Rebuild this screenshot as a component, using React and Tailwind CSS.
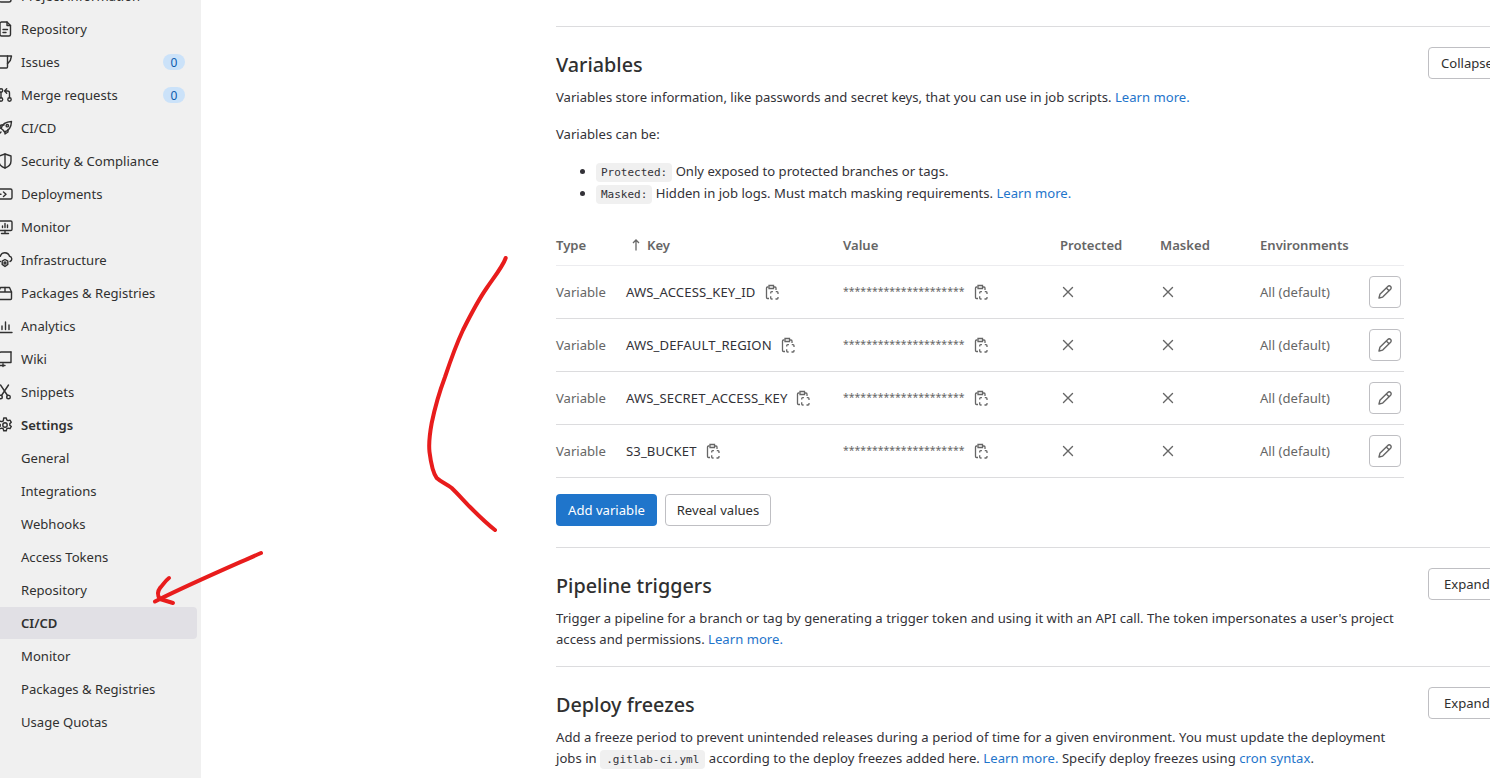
import React from "react";

const Ic = ({ children, className = "" }) => (
  <svg viewBox="0 0 16 16" width="16" height="16" fill="none" stroke="currentColor" strokeWidth="1.4" strokeLinecap="round" strokeLinejoin="round" className={"shrink-0 " + className}>
    {children}
  </svg>
);

const icons = {
  project: <><rect x="2" y="2" width="12" height="12" rx="2" /><path d="M5 6h6M5 9h4" /></>,
  repo: <><path d="M3 2.500A1.500 1.500 0 0 1 4.500 1H10l3.500 3.500V13.500A1.500 1.500 0 0 1 12 15H4.500A1.500 1.500 0 0 1 3 13.500z" /><path d="M10 1v3.500h3.500M6 8.500h4.500M6 11.500h3" /></>,
  issues: <><path d="M-2 2H14.500L13.300 6.500 10.500 9.800" /><path d="M10.500 2V13a1 1 0 0 1-1 1H-2" /></>,
  merge: <><circle cx="4" cy="3.500" r="1.700" /><circle cx="4" cy="12.500" r="1.700" /><circle cx="12.500" cy="12.500" r="1.700" /><path d="M4 5.200v5.600M12.500 10.800V6a2 2 0 0 0-2-2H8M9.700 1.800 7.500 4l2.200 2.200" /></>,
  rocket: <><path d="M6 10 4 8.500C5 5 8.500 1.800 14.500 1.500 14.200 7.500 11 11 7.500 12z" /><circle cx="10.300" cy="5.700" r="1.200" /><path d="M4.500 8H2l2-3h3M8 11.500V14l3-2V9.500M4 12l-2.500 2.500" /></>,
  shield: <><path d="M8 1 2 3v5c0 3.500 2.500 5.800 6 7 3.500-1.200 6-3.500 6-7V3z" /><path d="M8 1v14" /></>,
  deploy: <><path d="M1 4.500A1.500 1.500 0 0 1 2.500 3h11A1.500 1.500 0 0 1 15 4.500v7a1.500 1.500 0 0 1-1.500 1.500h-11A1.500 1.500 0 0 1 1 11.500" /><path d="M6.500 6 9 8.200 6.500 10.500M-2 8.200h6" /></>,
  monitor: <><rect x="1" y="2" width="14" height="9.500" rx="1.200" /><path d="M8 11.500V14.500M4.500 14.500h7M5.500 8.500V7M8 8.500V4.500M10.500 8.500V6" /></>,
  infra: <><path d="M3.500 9.500A2.700 2.700 0 0 1 3.300 4.200 4.800 4.800 0 0 1 12.500 4.300 2.700 2.700 0 0 1 13 9.500" /><circle cx="8" cy="11" r="1" /><path d="M8 7.500l2.800 1.700v3.200L8 14.500l-2.800-2.100V9.200z" /></>,
  pkg: <><path d="M1.500 7 3.500 2.500h9L14.500 7v6.500a1 1 0 0 1-1 1h-11a1 1 0 0 1-1-1z" /><path d="M1.500 7h13M8 2.500V7" /></>,
  chart: <><path d="M1 1.500V14.500H15" /><path d="M5 11.500V8M8.500 11.500V4M12 11.500V7" /></>,
  wiki: <><path d="M14 1H4a2 2 0 0 0-2 2v10.500" /><path d="M14 1v10.500H3.500A1.500 1.500 0 0 0 2 13a1.500 1.500 0 0 0 1.500 1.500H8M6 13v2.500" /><path d="M2 3v10" /></>,
  scissors: <><circle cx="3.500" cy="13" r="1.800" /><circle cx="11.500" cy="13" r="1.800" /><path d="M4.500 11.500 11.500 1M10.500 11.500 3.500 1" /></>,
  gear: <><circle cx="8" cy="8" r="2.200" /><path d="M6.700 1h2.600l.4 1.900 1.400.8 1.900-.6 1.300 2.200-1.500 1.300v1.600l1.500 1.300-1.300 2.200-1.900-.6-1.400.8-.4 1.900H6.700l-.4-1.900-1.400-.8-1.900.6L1.700 10.500l1.500-1.300V7.600L1.700 6.300 3 4.100l1.900.6 1.400-.8z" /></>,
};

const main = [
  ["Project information", "project"], ["Repository", "repo"], ["Issues", "issues", "0"], ["Merge requests", "merge", "0"],
  ["CI/CD", "rocket"], ["Security & Compliance", "shield"], ["Deployments", "deploy"], ["Monitor", "monitor"],
  ["Infrastructure", "infra"], ["Packages & Registries", "pkg"], ["Analytics", "chart"], ["Wiki", "wiki"], ["Snippets", "scissors"],
];
const sub = ["General", "Integrations", "Webhooks", "Access Tokens", "Repository", "CI/CD", "Monitor", "Packages & Registries", "Usage Quotas"];

const Copy = () => (
  <svg viewBox="0 0 16 16" width="16" height="16" fill="none" stroke="#666" strokeWidth="1.300" className="shrink-0">
    <path d="M4.500 3H3.500a1 1 0 0 0-1 1v9.500a1 1 0 0 0 1 1H5" />
    <path d="M5 1.500h4.500V4.500H5zM9.500 3h1.500a1 1 0 0 1 1 1V6" />
    <rect x="6.700" y="7.700" width="7.300" height="7.300" rx="1" strokeDasharray="4 2.870" strokeDashoffset="-4.080" />
  </svg>
);

const Chip = ({ children, className = "px-[5px]" }) => (
  <code className={"rounded-[4px] bg-[#f0f0f0] py-[3px] text-[#333238] text-[11px] [font-family:'DejaVu_Sans_Mono',monospace] " + className}>{children}</code>
);

const A = ({ children }) => <a className="text-[#1f75cb]">{children}</a>;

const Head = ({ title, btn, btnClass }) => (
  <div className="flex h-[32px] items-center justify-between">
    <h2 className="mt-[4px] text-[19.8px] leading-[32px] font-medium text-[#303030]">{title}</h2>
    <button className={"h-[32px] w-[88px] rounded-[4px] border border-[#bfbfc3] bg-white text-left text-[#303030] " + btnClass}>{btn}</button>
  </div>
);

const cols = "grid grid-cols-[70px_217px_217px_100px_100px_109px_35px] items-center";
const rows = ["AWS_ACCESS_KEY_ID", "AWS_DEFAULT_REGION", "AWS_SECRET_ACCESS_KEY", "S3_BUCKET"];

export default function App() {
  return (
    <div className="relative flex h-[778px] w-[1490px] overflow-hidden bg-white text-[13.1px] leading-[21px] text-[#333238] [font-family:'Noto_Sans',sans-serif]">
      <aside className="h-full w-[201px] shrink-0 overflow-hidden bg-[#f0f0f0] pr-[4px] text-[#303030]">
        <nav className="-mt-[20px] flex flex-col gap-px">
          {main.map(([t, ic, badge]) => (
            <div key={t} className="flex h-[32px] items-center gap-[8px] -ml-[3px]">
              <Ic className="overflow-visible">{icons[ic]}</Ic>
              <span className="flex-1">{t}</span>
              {badge && <span className="mr-[12px] flex h-[16px] w-[22px] items-center justify-center rounded-full bg-[#cbe2f9] text-[12px] text-[#0b5cad]">{badge}</span>}
            </div>
          ))}
          <div className="flex h-[32px] items-center gap-[8px] -ml-[3px] font-semibold">
            <Ic>{icons.gear}</Ic>
            <span>Settings</span>
          </div>
          {sub.map((t, i) => (
            <div key={i} className={"flex h-[32px] items-center rounded-r-[4px] pl-[21px] " + (t === "CI/CD" ? "bg-[#e1e0e5] font-semibold" : "")}>{t}</div>
          ))}
        </nav>
      </aside>

      <main className="min-w-0 flex-1 pt-[26px] pl-[355px]">
        <div className="w-[960px]">
          <section className="border-t border-[#dcdcde] pt-[20px] pb-[21px]">
            <Head title="Variables" btn="Collapse" btnClass="pl-[12px]" />
            <p className="mt-[8px]">Variables store information, like passwords and secret keys, that you can use in job scripts. <A>Learn more.</A></p>
            <p className="mt-[16px]">Variables can be:</p>
            <ul className="mt-[16px] list-disc pl-[40px]">
              <li className="h-[22px]"><Chip>Protected:</Chip> Only exposed to protected branches or tags.</li>
              <li className="h-[22px]"><Chip>Masked:</Chip> Hidden in job logs. Must match masking requirements. <A>Learn more.</A></li>
            </ul>
            <div className="mt-[20px] w-[848px] text-[#666]">
              <div className={cols + " h-[41px] border-b border-[#ececef] font-semibold"}>
                <span>Type</span>
                <span className="flex items-center gap-[7px] pl-[6px]">
                  <svg viewBox="0 0 8 12" width="8" height="12" fill="none" stroke="currentColor" strokeWidth="1.300" className="shrink-0"><path d="M4 11.500V1M1 4l3-3 3 3" /></svg>
                  Key
                </span>
                <span>Value</span>
                <span>Protected</span>
                <span>Masked</span>
                <span>Environments</span>
                <span />
              </div>
              {rows.map((k) => (
                <div key={k} className={cols + " h-[53px] border-b border-[#dcdcde]"}>
                  <span>Variable</span>
                  <span className="flex items-center gap-[8px] tracking-[0.12px] text-[#333238]">{k}<Copy /></span>
                  <span className="flex items-center gap-[8px]"><span className="-mt-[2px] w-[122px] overflow-hidden text-[10.5px] whitespace-nowrap">*********************</span><Copy /></span>
                  <Ic><path d="M3.500 3.500l9 9M12.500 3.500l-9 9" /></Ic>
                  <Ic><path d="M3.500 3.500l9 9M12.500 3.500l-9 9" /></Ic>
                  <span>All (default)</span>
                  <button className="flex h-[32px] w-[32px] items-center justify-center rounded-[4px] border border-[#bfbfc3]">
                    <Ic><path d="M2 14l.9-3.700L10.800 2.400a1.800 1.800 0 0 1 2.800 2.800L5.700 13.100zM9.300 3.900l2.800 2.800" /></Ic>
                  </button>
                </div>
              ))}
            </div>
            <div className="mt-[16px] flex gap-[8px]">
              <button className="h-[32px] w-[101px] rounded-[4px] bg-[#1f75cb] text-white">Add variable</button>
              <button className="h-[32px] w-[106px] rounded-[4px] border border-[#bfbfc3] text-[#303030]">Reveal values</button>
            </div>
          </section>

          <section className="border-t border-[#dcdcde] pt-[20px] pb-[16px]">
            <Head title="Pipeline triggers" btn="Expand" btnClass="pl-[15px]" />
            <p className="mt-[8px] w-[840px] tracking-[0.015px]">Trigger a pipeline for a branch or tag by generating a trigger token and using it with an API call. The token impersonates a user's project access and permissions. <A>Learn more.</A></p>
          </section>

          <section className="border-t border-[#dcdcde] pt-[20px]">
            <Head title="Deploy freezes" btn="Expand" btnClass="pl-[15px]" />
            <p className="mt-[8px] w-[840px] tracking-[0.035px]">Add a freeze period to prevent unintended releases during a period of time for a given environment. You must update the deployment jobs in <Chip className="px-[6px]">.gitlab-ci.yml</Chip> according to the deploy freezes added here. <A>Learn more.</A> Specify deploy freezes using <A>cron syntax</A>.</p>
          </section>
        </div>
      </main>

      <svg className="pointer-events-none absolute top-0 left-0" width="1490" height="778" fill="none" stroke="#e81c1c" strokeWidth="4" strokeLinecap="round" strokeLinejoin="round">
        <path d="M505.700 258C503 266 495 276 486.700 288 477 302 470 316 463 330 456 345 450 362 445 377 439 393 435 407 431.700 423 429.500 435 428.500 443 429.500 452 431 464 433 473 436.700 478 441 482 447 484 451.700 488 458 494 464 501 470 507 478 515 486 523 495 530" />
        <path d="M261 553C225 569 190 584 158 600L155 601.500" />
        <path d="M169 578C165 581 163 585 160 588 157 592 157 595 160 599L173 603" />
      </svg>
    </div>
  );
}
